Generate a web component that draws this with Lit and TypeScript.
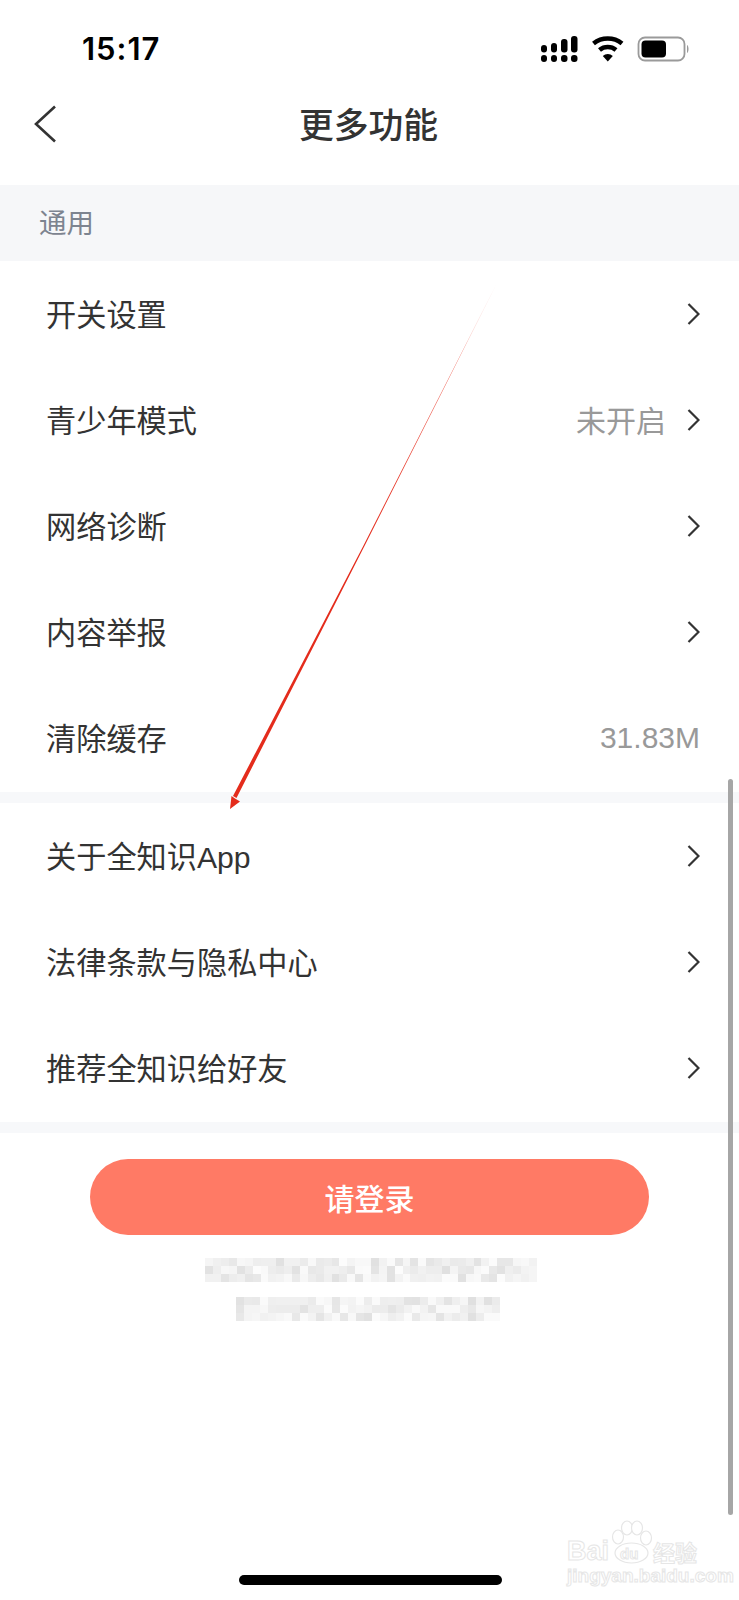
import { LitElement, html, css, svg } from "lit";
import { customElement } from "lit/decorators.js";

const general = [
  { label: "开关设置", chevron: true },
  { label: "青少年模式", value: "未开启", cjk: true, chevron: true },
  { label: "网络诊断", chevron: true },
  { label: "内容举报", chevron: true },
  { label: "清除缓存", value: "31.83M", chevron: false },
];
const about = ["关于全知识App", "法律条款与隐私中心", "推荐全知识给好友"];

const mosaic = (cols: number, rows: number, seed: number) =>
  Array.from({ length: cols * rows }, (_, i) => {
    const n = Math.sin((i + 1) * 12.9898 + seed * 78.233) * 43758.5453;
    const r = n - Math.floor(n);
    const g = Math.round(224 + r * 28);
    return `rgb(${g},${g},${g})`;
  });

@customElement("app-root")
export class AppRoot extends LitElement {
  static styles = css`
    :host {
      display: block;
      position: relative;
      width: 739px;
      height: 1600px;
      overflow: hidden;
      background: #fff;
      color: #333;
      font-family: "Liberation Sans", "Noto Sans CJK SC", sans-serif;
    }
    .status {
      height: 80px;
      box-sizing: border-box;
      padding: 18px 49px 0 82px;
      display: flex;
      justify-content: space-between;
      align-items: flex-start;
    }
    .time {
      font-family: Inter, "Liberation Sans", sans-serif;
      font-size: 31px;
      line-height: 62px;
      height: 62px;
      font-weight: 600;
      letter-spacing: 1px;
      color: #000;
    }
    .status-icons { display: block; margin-top: 17px; }
    .nav {
      height: 105px;
      box-sizing: border-box;
      padding: 0 2px 13px 0;
      position: relative;
      display: flex;
      justify-content: center;
      align-items: center;
    }
    .title { font-size: 34.8px; font-weight: 500; line-height: 46px; color: #333; }
    .back { position: absolute; left: 33px; top: 25px; }
    .section {
      height: 76px;
      box-sizing: border-box;
      padding: 0 0 4px 39px;
      background: #f6f7f9;
      color: #7d8490;
      font-size: 27.5px;
      display: flex;
      align-items: center;
    }
    .row {
      height: 106px;
      box-sizing: border-box;
      padding: 0 39px 0 46px;
      display: flex;
      align-items: center;
      font-size: 30.2px;
      color: #333;
    }
    .label { flex: 1; padding-bottom: 3px; }
    .value { color: #999; font-size: 30px; }
    .value.cjk { padding-bottom: 3px; }
    .chev { display: block; margin-left: 21px; }
    .gap { height: 11px; margin-top: 1px; background: #f7f8fa; }
    .footer {
      display: flex;
      flex-direction: column;
      align-items: center;
      padding-top: 26px;
    }
    .login {
      width: 559px;
      height: 76px;
      border: 0;
      border-radius: 38px;
      background: #ff7a65;
      color: #fff;
      font: 500 30px "Liberation Sans", "Noto Sans CJK SC", sans-serif;
      padding: 0;
    }
    .blur { display: grid; grid-auto-rows: 8px; }
    .blur.one { margin: 23px 0 0 3px; grid-template-columns: repeat(42, 7.9px); }
    .blur.two { margin: 15px 3px 0 0; grid-template-columns: repeat(33, 8px); }
    .scroll {
      position: absolute;
      left: 728px;
      top: 779px;
      width: 5px;
      height: 736px;
      border-radius: 3px;
      background: #a6a6a6;
    }
    .home {
      position: absolute;
      left: 239px;
      top: 1575px;
      width: 263px;
      height: 10px;
      border-radius: 5px;
      background: #000;
    }
    .arrow { position: absolute; left: 0; top: 0; pointer-events: none; }
    .mark {
      position: absolute;
      left: 566px;
      top: 1520px;
      width: 136px;
      height: 66px;
      color: transparent;
      -webkit-text-stroke: 1px #e6e6e6;
    }
    .mark svg { position: absolute; left: 0; top: 0; }
    .mark span { position: absolute; white-space: nowrap; }
    .bai { left: 1px; top: 18px; font: 700 27px/27px "Liberation Sans", sans-serif; }
    .du { left: 54px; top: 26px; font: 700 15px/15px "Liberation Sans", sans-serif; }
    .jy { left: 87px; top: 19px; font: 700 22px/25px "Noto Sans CJK SC", sans-serif; }
    .url {
      left: 1px;
      top: 46px;
      font: 700 19px/20px "Liberation Sans", sans-serif;
    }
  `;

  private chevron() {
    return html`<svg class="chev" width="13" height="22" viewBox="0 0 13 22" aria-hidden="true">
      <path d="M1.5 1 L11.5 11 L1.5 21" fill="none" stroke="#333" stroke-width="2.2" />
    </svg>`;
  }

  private statusIcons() {
    const bars = [
      [541, 45, 6],
      [551, 43, 6],
      [561, 39, 6.5],
      [571, 36, 6.5],
    ];
    return html`<svg class="status-icons" width="150" height="30" viewBox="540 35 150 30" aria-hidden="true">
      ${bars.map(
        ([x, y, w]) => svg`
          <rect x=${x} y=${y} width=${w} height=${52.5 - y} rx="3" fill="#000" />
          <rect x=${x} y="55" width=${w} height="7" rx="3" fill="#000" />`
      )}
      <path d="M593.5 43.5 A 23 23 0 0 1 622 43.5" fill="none" stroke="#000" stroke-width="4.6" />
      <path d="M599.5 50 A 13 13 0 0 1 616 50" fill="none" stroke="#000" stroke-width="4.6" />
      <path d="M602.8 56 A 7 7 0 0 1 612.8 56 L607.8 61.5 Z" fill="#000" />
      <rect x="638.5" y="37.5" width="46" height="23" rx="6.5" fill="none" stroke="#9a9a9a" stroke-width="1.8" />
      <rect x="641.5" y="40.5" width="24.5" height="17" rx="4" fill="#000" />
      <path d="M687 45 C 689 46 689 52 687 53 Z" fill="#9a9a9a" />
    </svg>`;
  }

  private blur(cls: string, cols: number, seed: number) {
    return html`<div class="blur ${cls}" aria-hidden="true">
      ${mosaic(cols, 3, seed).map((c) => html`<i style="background:${c}"></i>`)}
    </div>`;
  }

  render() {
    return html`
      <div class="status">
        <span class="time">15:17</span>
        ${this.statusIcons()}
      </div>
      <div class="nav">
        <svg class="back" width="24" height="38" viewBox="0 0 24 38" aria-hidden="true">
          <path d="M22 1.5 L3 19 L22 36.5" fill="none" stroke="#333" stroke-width="2.6" />
        </svg>
        <span class="title">更多功能</span>
      </div>
      <div class="section">通用</div>
      ${general.map(
        (r) => html`<div class="row">
          <span class="label">${r.label}</span>
          ${r.value ? html`<span class="value ${r.cjk ? "cjk" : ""}">${r.value}</span>` : ""}
          ${r.chevron ? this.chevron() : ""}
        </div>`
      )}
      <div class="gap"></div>
      ${about.map(
        (t) => html`<div class="row"><span class="label">${t}</span>${this.chevron()}</div>`
      )}
      <div class="gap"></div>
      <div class="footer">
        <button class="login">请登录</button>
        ${this.blur("one", 42, 1)}
        ${this.blur("two", 33, 2)}
      </div>

      <svg class="arrow" width="739" height="1600" viewBox="0 0 739 1600" aria-hidden="true">
        <defs>
          <linearGradient id="arrowFade" gradientUnits="userSpaceOnUse" x1="497" y1="283" x2="232" y2="800">
            <stop offset="0" stop-color="#e8301f" stop-opacity="0.35" />
            <stop offset="0.2" stop-color="#e8301f" stop-opacity="0.8" />
            <stop offset="0.5" stop-color="#e42c1c" />
          </linearGradient>
        </defs>
        <path d="M497 283 L364.5 546 L236.5 798 L233 796 L363.5 545.5 Z" fill="url(#arrowFade)" />
        <path d="M230 809 L231.5 796 L235 798.5 L240 801.5 Z" fill="#e42c1c" />
      </svg>

      <div class="scroll"></div>
      <div class="home"></div>

      <div class="mark">
        <svg width="136" height="66" viewBox="0 0 136 66" aria-hidden="true">
          <g fill="#fff" stroke="#e6e6e6" stroke-width="1.2">
            <ellipse cx="52" cy="17" rx="5.5" ry="7" />
            <ellipse cx="61" cy="8" rx="5.5" ry="7" />
            <ellipse cx="71" cy="8" rx="5.5" ry="7" />
            <ellipse cx="80" cy="18" rx="5.5" ry="7" />
            <ellipse cx="65.5" cy="33" rx="16.5" ry="10" />
          </g>
        </svg>
        <span class="bai">Bai</span>
        <span class="du">du</span>
        <span class="jy">经验</span>
        <span class="url">jingyan.baidu.com</span>
      </div>
    `;
  }
}
